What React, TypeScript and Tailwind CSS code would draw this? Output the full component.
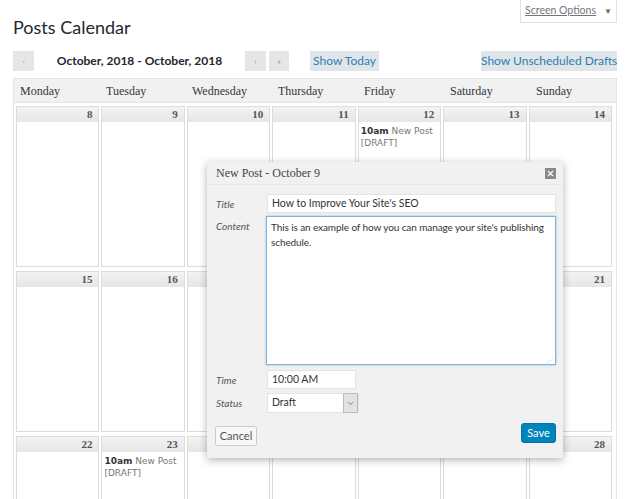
import { ChevronDown, X } from "lucide-react";

const days = ["Monday", "Tuesday", "Wednesday", "Thursday", "Friday", "Saturday", "Sunday"];

const weeks = [
  [8, 9, 10, 11, 12, 13, 14],
  [15, 16, 17, 18, 19, 20, 21],
  [22, 23, 24, 25, 26, 27, 28],
];

const events: Record<number, boolean> = { 12: true, 23: true };

function DayCell({ day }: { day: number }) {
  return (
    <div className="flex h-[161px] flex-col border border-[#dcdcdc] bg-white">
      <div className="h-[15px] bg-gradient-to-b from-[#f3f3f3] to-[#e6e6e6] pr-[6px] text-right font-['Liberation_Serif',serif] text-[11px] font-bold leading-[15px] text-[#555]">
        {day}
      </div>
      {events[day] && (
        <div className="px-[2px] pt-[3px] font-['DejaVu_Sans',sans-serif] text-[9px] leading-[12px] text-[#777]">
          <div>
            <span className="font-bold text-[#333]">10am</span> New Post
          </div>
          <div>[DRAFT]</div>
        </div>
      )}
    </div>
  );
}

function Field({ label, children }: { label: string; children: React.ReactNode }) {
  return (
    <div className="flex items-start">
      <div className="w-[51px] shrink-0 pt-[3px] text-[10px] italic text-[#555]">{label}</div>
      {children}
    </div>
  );
}

export default function App() {
  return (
    <main className="relative h-[499px] w-[627px] overflow-hidden bg-white font-['Lato',sans-serif] text-[#23282d]">
      <div className="flex justify-end pr-[10px]">
        <div className="flex h-[23px] w-[97px] items-center justify-center gap-[8px] border-x border-b border-[#e1e1e1] text-[10.5px] text-[#72777c]">
          <span className="underline">Screen Options</span>
          <span className="text-[8px] text-[#666]">▼</span>
        </div>
      </div>

      <h1 className="mt-[-8px] pl-[13px] text-[18px] leading-[24px] text-[#23282d]">Posts Calendar</h1>

      <div className="mt-[12px] flex h-[20px] items-center pl-[13px]">
        <button className="h-[20px] w-[21px] bg-[#e6e6e6] text-[8px] text-[#999]">‹</button>
        <div className="w-[211px] text-center text-[12px] font-bold text-[#23282d]">October, 2018 - October, 2018</div>
        <button className="h-[20px] w-[21px] bg-[#e6e6e6] text-[8px] text-[#7a8a99]">›</button>
        <button className="ml-[3px] h-[20px] w-[20px] bg-[#e6e6e6] text-[8px] text-[#7a8a99]">»</button>
        <button className="ml-[21px] h-[20px] w-[69px] bg-[#e0e5e9] text-[12px] text-[#2e7eb0]">Show Today</button>
        <div className="flex-1" />
        <button className="mr-[10px] h-[20px] w-[136px] whitespace-nowrap bg-[#e0e5e9] text-[12px] text-[#2e7eb0]">
          Show Unscheduled Drafts
        </button>
      </div>

      <div className="ml-[13px] mt-[7px] w-[604px] border border-[#e5e5e5]">
        <div className="grid h-[24px] grid-cols-7 border-b border-[#e5e5e5] bg-[#f1f1f1]">
          {days.map((d) => (
            <div key={d} className="pl-[6px] font-['Liberation_Serif',serif] text-[12px] leading-[24px] text-[#32373c]">
              {d}
            </div>
          ))}
        </div>
        <div className="flex flex-col gap-[4px] pb-[4px] pl-[2px] pr-[4px] pt-[3px]">
          {weeks.map((w, i) => (
            <div key={i} className="grid grid-cols-7 gap-[2px]">
              {w.map((d) => (
                <DayCell key={d} day={d} />
              ))}
            </div>
          ))}
        </div>
      </div>

      <div className="absolute left-[207px] top-[162px] w-[356px] bg-[#f1f1f1] shadow-[0_2px_8px_rgba(0,0,0,0.3)]">
        <div className="flex h-[23px] items-center justify-between border-b border-[#e8e8e8] pl-[9px] pr-[7px]">
          <span className="font-['Liberation_Serif',serif] text-[12px] text-[#444]">New Post - October 9</span>
          <span className="flex h-[11px] w-[11px] items-center justify-center bg-[#8a8a8a] text-white">
            <X size={9} strokeWidth={3} />
          </span>
        </div>
        <div className="flex flex-col gap-[3px] pl-[9px] pr-[7px] pt-[9px]">
          <Field label="Title">
            <div className="flex h-[19px] w-[289px] items-center border border-[#e3e3e3] bg-white pl-[4px] text-[10.5px] text-[#333]">
              How to Improve Your Site's SEO
            </div>
          </Field>
          <Field label="Content">
            <div className="relative -ml-px h-[149px] w-[290px] border border-[#7fb3dd] bg-white pl-[4px] pr-[2px] pt-[3px] text-[10px] leading-[15px] tracking-[-0.1px] text-[#333] shadow-[0_0_2px_rgba(30,140,190,0.5)]">
              This is an example of how you can manage your site's publishing schedule.
              <span className="absolute bottom-[1px] right-[2px] text-[6px] leading-none text-[#aaa]">⋰</span>
            </div>
          </Field>
          <div className="mt-[2px]">
            <Field label="Time">
              <div className="flex h-[19px] w-[89px] items-center border border-[#e3e3e3] bg-white pl-[4px] text-[10.5px] text-[#333]">
                10:00 AM
              </div>
            </Field>
          </div>
          <div className="mt-[1px]">
            <Field label="Status">
              <div className="flex h-[20px] w-[92px] items-center justify-between border border-[#e3e3e3] bg-white pl-[4px] text-[10.5px] text-[#333]">
                Draft
                <span className="flex h-[20px] w-[15px] items-center justify-center border border-[#bbb] bg-[#e2e2e2] text-[#666]">
                  <ChevronDown size={9} />
                </span>
              </div>
            </Field>
          </div>
        </div>
        <div className="mt-[10px] flex items-start justify-between pb-[12px] pl-[8px] pr-[7px]">
          <button className="mt-[3px] h-[20px] w-[42px] rounded-[2px] border border-[#ccc] bg-[#f7f7f7] text-[11px] text-[#555]">
            Cancel
          </button>
          <button className="h-[20px] w-[35px] rounded-[3px] border border-[#0073aa] bg-[#0085ba] text-[11px] text-white">
            Save
          </button>
        </div>
      </div>
    </main>
  );
}
